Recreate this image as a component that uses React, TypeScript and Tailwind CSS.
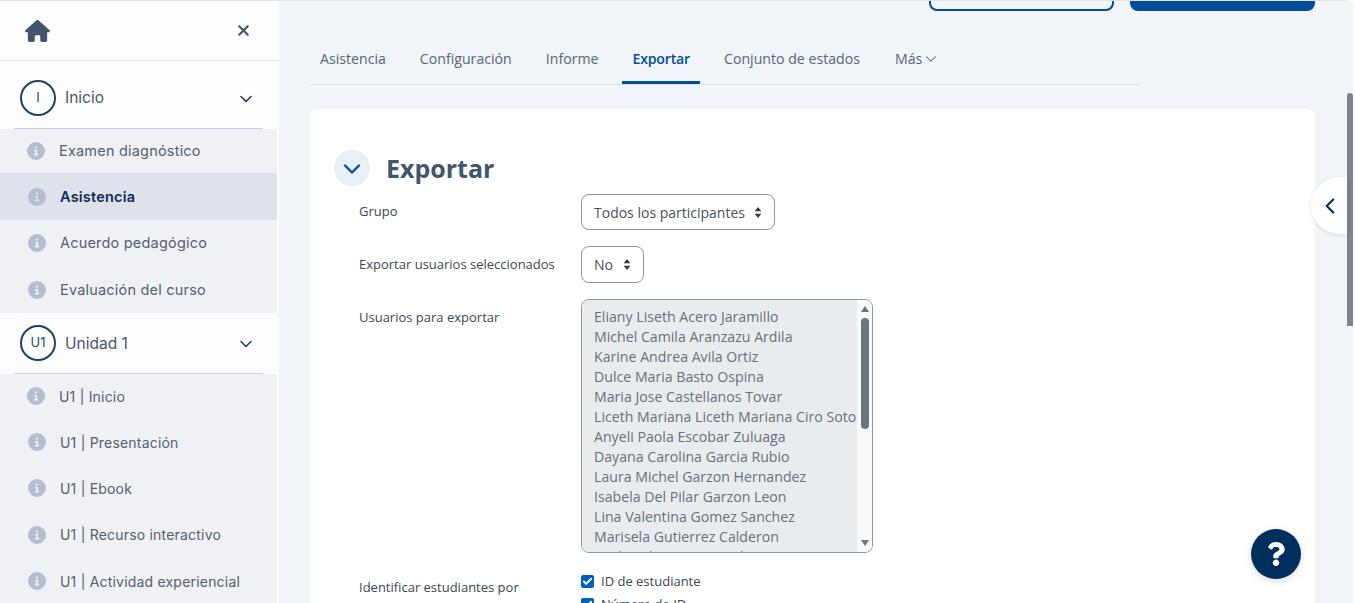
import { Check, ChevronDown, ChevronLeft, X } from "lucide-react";
import { FaQuestion } from "react-icons/fa";
import { FaCircleInfo, FaHouse } from "react-icons/fa6";

const poppins = "font-['Inter','Noto_Sans',sans-serif]";
const segoe = "font-['Open_Sans','Noto_Sans',sans-serif]";

const tabs = ["Asistencia", "Configuración", "Informe", "Exportar", "Conjunto de estados"];

const users = [
  "Eliany Liseth Acero Jaramillo",
  "Michel Camila Aranzazu Ardila",
  "Karine Andrea Avila Ortiz",
  "Dulce Maria Basto Ospina",
  "Maria Jose Castellanos Tovar",
  "Liceth Mariana Liceth Mariana Ciro Soto",
  "Anyeli Paola Escobar Zuluaga",
  "Dayana Carolina Garcia Rubio",
  "Laura Michel Garzon Hernandez",
  "Isabela Del Pilar Garzon Leon",
  "Lina Valentina Gomez Sanchez",
  "Marisela Gutierrez Calderon",
  "Leidy Yohana Hernandez Mora",
];

function SectionRow({ badge, label, className }: { badge: string; label: string; className: string }) {
  return (
    <div className={`flex flex-col bg-[#fdfdfe] ${className}`}>
      <div className="flex flex-1 items-center pr-[21px] pl-5">
        <span className="flex h-9 w-9 items-center justify-center rounded-full border-2 border-[#1d4268] text-[13px] text-[#1d4a78]">
          {badge}
        </span>
        <span className="mt-px ml-[9px] flex-1 text-[15.5px] text-[#4a5468]">{label}</span>
        <ChevronDown className="mt-[2px] h-5 w-5 text-[#1d3557]" strokeWidth={1.8} />
      </div>
      <div className="mx-[14px] h-px bg-[#c5cfe0]" />
    </div>
  );
}

function SubItem({
  label,
  active,
  first,
  tight,
  height = "h-[46px]",
}: {
  label: string;
  active?: boolean;
  first?: boolean;
  tight?: boolean;
  height?: string;
}) {
  return (
    <div className={`flex items-center ${first ? "pl-[27px]" : "pl-[28px]"} ${height} ${active ? "bg-[#dfe2eb]" : ""}`}>
      <FaCircleInfo className="h-[18px] w-[18px] shrink-0 text-[#b5bed0]" />
      <span
        className={`ml-[14px] tracking-[0.2px] ${tight ? "text-[14px]" : "text-[14.5px]"} ${active ? "font-semibold text-[#0f2c55]" : "text-[#56606f]"}`}
      >
        {label}
      </span>
    </div>
  );
}

function Sidebar() {
  return (
    <aside className={`w-[279px] shrink-0 bg-[#fdfdfe] ${poppins}`}>
      <div className="flex h-[60px] items-center justify-between border-b border-[#e3e8f0] pr-[27px] pl-[25px]">
        <FaHouse className="h-[22px] w-[25px] text-[#44546a]" />
        <X className="h-[17px] w-[17px] text-[#44546a]" strokeWidth={3} />
      </div>
      <div className="w-[277px]">
        <SectionRow badge="I" label="Inicio" className="h-[68px] pt-[6px]" />
        <div className="bg-[#eff1f4]">
          <SubItem label="Examen diagnóstico" first height="h-[44px]" />
          <SubItem label="Asistencia" active height="h-[47px]" />
          <SubItem label="Acuerdo pedagógico" />
          <SubItem label="Evaluación del curso" height="h-[47px]" />
        </div>
        <SectionRow badge="U1" label="Unidad 1" className="h-[61px]" />
        <div className="bg-[#eff1f4]">
          <SubItem label="U1 | Inicio" first tight height="h-[45px] pb-px" />
          <SubItem label="U1 | Presentación" tight />
          <SubItem label="U1 | Ebook" tight />
          <SubItem label="U1 | Recurso interactivo" tight height="h-[47px]" />
          <SubItem label="U1 | Actividad experiencial" tight />
        </div>
      </div>
    </aside>
  );
}

function Tabs() {
  return (
    <nav className="mt-[38px] ml-[31px] flex h-[36px] w-[830px] shrink-0 items-end gap-[14px] border-b border-[#dee2e6] text-[14.15px] text-[#5b6673]">
      {tabs.map((t) => (
        <span
          key={t}
          className={`h-[36px] px-[10px] pt-px leading-[20px] ${t === "Exportar" ? "border-b-[3px] border-[#004c97] font-semibold tracking-[-0.2px] text-[#004c97]" : ""}`}
        >
          {t}
        </span>
      ))}
      <span className="ml-px flex h-[36px] items-start px-[10px] pt-px leading-[20px]">
        Más
        <ChevronDown className="mt-px h-[18px] w-[18px]" strokeWidth={1.4} />
      </span>
    </nav>
  );
}

function Caret() {
  return (
    <svg viewBox="0 0 8 13" className="h-[11px] w-[8px] fill-[#343a40]">
      <path d="M4 0 8 5H0zM4 13 0 8h8z" />
    </svg>
  );
}

function FakeSelect({ value, width, height }: { value: string; width: string; height: string }) {
  return (
    <div className={`flex items-center justify-between rounded-lg border border-[#8f959e] px-3 text-[14px] text-[#495057] ${width} ${height}`}>
      {value}
      <Caret />
    </div>
  );
}

function FormRow({ label, height, children }: { label: string; height: string; children: React.ReactNode }) {
  return (
    <div className={`flex items-center ${height}`}>
      <span className="w-[222px] shrink-0 text-[13px] text-[#3c4650]">{label}</span>
      {children}
    </div>
  );
}

function UsersList() {
  return (
    <div className="flex items-start">
      <span className="mt-[9px] w-[222px] shrink-0 text-[13px] text-[#3c4650]">Usuarios para exportar</span>
      <div className="flex h-[254px] w-[292px] overflow-hidden rounded-lg border border-[#8f959e]">
        <div className="w-[275px] shrink-0 overflow-hidden bg-[#e9ecef] pt-[7px] pl-3 text-[14.15px] leading-[20px] whitespace-nowrap text-[#6a7178]">
          {users.map((u) => (
            <div key={u}>{u}</div>
          ))}
        </div>
        <div className="flex flex-1 flex-col items-center bg-[#f8f9fa] pt-[6px]">
          <svg viewBox="0 0 8 6" className="h-[6px] w-[8px] fill-[#6c757d]">
            <path d="M4 0 8 6H0z" />
          </svg>
          <div className="mt-[6px] h-[111px] w-2 rounded bg-[#6c757d]" />
          <svg viewBox="0 0 8 6" className="mt-auto mb-[6px] h-[6px] w-[8px] fill-[#6c757d]">
            <path d="M4 6 0 0h8z" />
          </svg>
        </div>
      </div>
    </div>
  );
}

function CheckItem({ label }: { label: string }) {
  return (
    <div className="flex h-[23px] items-center gap-[7px] text-[13px] text-[#3c4650]">
      <span className="flex h-[13px] w-[13px] items-center justify-center rounded-[2px] bg-[#0060c0]">
        <Check className="h-[11px] w-[11px] text-white" strokeWidth={4} />
      </span>
      {label}
    </div>
  );
}

function Card() {
  return (
    <section className="mt-6 mr-[38px] ml-[31px] min-h-0 flex-1 rounded-t-lg bg-white pt-[41px] pl-6">
      <div className="flex h-9 items-center gap-4">
        <span className="flex h-9 w-9 items-center justify-center rounded-full bg-[#e7eff8]">
          <ChevronDown className="mt-[2px] h-7 w-7 text-[#004c97]" strokeWidth={2} />
        </span>
        <h2 className="mt-[2px] text-[25px] font-bold text-[#44546a]">Exportar</h2>
      </div>
      <div className="mt-2 pl-[25px]">
        <FormRow label="Grupo" height="h-[36px]">
          <FakeSelect value="Todos los participantes" width="w-[194px]" height="h-[36px]" />
        </FormRow>
        <div className="mt-4">
          <FormRow label="Exportar usuarios seleccionados" height="h-[37px]">
            <FakeSelect value="No" width="w-[63px]" height="h-[37px]" />
          </FormRow>
        </div>
        <div className="mt-4">
          <UsersList />
        </div>
        <div className="mt-[17px] flex items-start">
          <span className="mt-[8px] w-[222px] shrink-0 text-[13px] text-[#3c4650]">Identificar estudiantes por</span>
          <div>
            <CheckItem label="ID de estudiante" />
            <CheckItem label="Número de ID" />
          </div>
        </div>
      </div>
    </section>
  );
}

export default function App() {
  return (
    <div className="h-[603px] w-[1355px] overflow-hidden bg-white">
      <div className="relative mr-[2px] flex h-full overflow-hidden rounded-tr-lg border-t border-[#e3e3e3]">
        <Sidebar />
        <main className={`flex min-w-0 flex-1 flex-col bg-[#f1f4f8] ${segoe}`}>
          <div className="flex h-[10px] shrink-0 items-end justify-end gap-4 overflow-hidden pr-[38px]">
            <span className="h-8 w-[185px] shrink-0 rounded-lg border-2 border-[#004c97]" />
            <span className="h-8 w-[185px] shrink-0 rounded-lg bg-[#004c97]" />
          </div>
          <Tabs />
          <Card />
        </main>

        {/* scrollbar, collapse tab and help sit over the page */}
        <div className="absolute top-[92px] right-0 h-[233px] w-[6px] rounded-t bg-[#7b8290]" />
        <button className="absolute top-[176px] right-[6px] flex h-[57px] w-[36px] items-center justify-start rounded-l-full bg-white pl-[6px] shadow-[0_1px_4px_rgba(0,0,0,0.12)]">
          <ChevronLeft className="h-[26px] w-[26px] text-[#0f2c55]" strokeWidth={2} />
        </button>
        <button className="absolute top-[528px] right-[52px] flex h-[50px] w-[50px] items-center justify-center rounded-full bg-[#002e5d] shadow-[0_2px_8px_rgba(0,0,0,0.15)]">
          <FaQuestion className="h-[24px] w-[24px] text-white" />
        </button>
      </div>
    </div>
  );
}
